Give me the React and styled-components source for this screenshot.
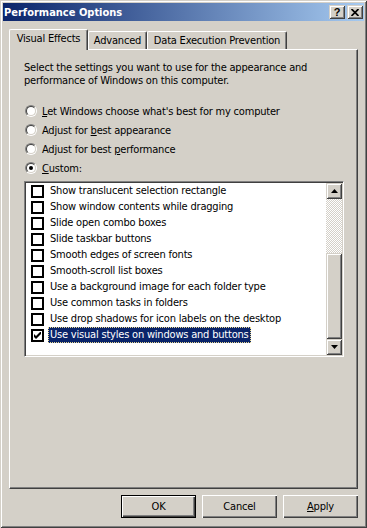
import React from 'react';
import styled, { createGlobalStyle, css } from 'styled-components';

const FACE = '#D4D0C8';
const FONT = `"DejaVu Sans Condensed", "Liberation Sans", sans-serif`;

const Global = createGlobalStyle`
  html, body { margin: 0; padding: 0; background: ${FACE}; }
  body { font-family: ${FONT}; font-size: 11px; color: #000; letter-spacing: -0.2px; }
  * { box-sizing: border-box; }
`;

const raised = css`
  background: ${FACE};
  box-shadow: inset 1px 1px ${FACE}, inset -1px -1px #404040, inset 2px 2px #fff, inset -2px -2px #808080;
`;

const Window = styled.div`
  width: 367px;
  height: 528px;
  padding: 3px;
  background: ${FACE};
  box-shadow: inset 1px 1px ${FACE}, inset -1px -1px #404040, inset 2px 2px #fff, inset -2px -2px #808080;
  display: flex;
  flex-direction: column;
`;

const TitleBar = styled.div`
  flex: none;
  height: 18px;
  display: flex;
  align-items: center;
  padding: 0 1px 0 1px;
  background: linear-gradient(to right, #0a246a, #a6caf0);
`;

const Title = styled.span`
  flex: 1;
  color: #fff;
  font-weight: bold;
  font-size: 11px;
  letter-spacing: 0;
  white-space: nowrap;
`;

const CaptionButton = styled.div`
  ${raised};
  width: 16px;
  height: 14px;
  margin-left: ${p => p.$gap || 0}px;
  display: flex;
  align-items: center;
  justify-content: center;
  font-family: "Liberation Sans", sans-serif;
  font-weight: bold;
  font-size: 11px;
  line-height: 14px;
  letter-spacing: 0;
`;

const TabStrip = styled.div`
  flex: none;
  height: 20px;
  margin: 8px 6px 0 6px;
  display: flex;
  align-items: flex-end;
  position: relative;
  z-index: 1;
`;

const Tab = styled.div`
  flex: none;
  width: ${p => p.$w}px;
  height: ${p => (p.$active ? 21 : 18)}px;
  margin-bottom: ${p => (p.$active ? -1 : 0)}px;
  background: ${FACE};
  border-top: 1px solid #fff;
  border-left: 1px solid #fff;
  border-right: 1px solid #404040;
  border-radius: 2px 2px 0 0;
  box-shadow: inset -1px 0 #808080;
  padding-top: 2px;
  line-height: 13px;
  text-align: center;
  white-space: nowrap;
`;

const Panel = styled.div`
  flex: none;
  height: 440px;
  margin: 0 6px;
  border-top: 1px solid #fff;
  border-left: 1px solid #fff;
  border-right: 1px solid #404040;
  border-bottom: 1px solid #404040;
  box-shadow: inset -1px -1px #808080;
  padding: 11px 14px 0 14px;
  display: flex;
  flex-direction: column;
`;

const Description = styled.p`
  margin: 0;
  line-height: 13px;
  white-space: nowrap;
`;

const RadioGroup = styled.div`
  margin-top: 18px;
  display: flex;
  flex-direction: column;
  gap: 7px;
`;

const RadioRow = styled.div`
  height: 12px;
  display: flex;
  align-items: center;
  gap: 5px;
  padding-left: 1px;
  white-space: nowrap;
`;

const RadioCircle = styled.span`
  flex: none;
  width: 12px;
  height: 12px;
  border-radius: 50%;
  border: 1px solid;
  border-color: #808080 #fff #fff #808080;
  display: flex;
  align-items: center;
  justify-content: center;
`;

const RadioInner = styled.span`
  width: 10px;
  height: 10px;
  border-radius: 50%;
  border: 1px solid;
  border-color: #404040 ${FACE} ${FACE} #404040;
  background: #fff;
  display: flex;
  align-items: center;
  justify-content: center;
  &::after {
    content: '';
    display: ${p => (p.$checked ? 'block' : 'none')};
    width: 4px;
    height: 4px;
    border-radius: 50%;
    background: #000;
  }
`;

const U = styled.span`
  text-decoration: underline;
  text-underline-offset: 1px;
`;

const ListBox = styled.div`
  margin-top: 7px;
  width: 320px;
  height: 176px;
  border: 1px solid;
  border-color: #808080 #fff #fff #808080;
  box-shadow: inset 1px 1px #404040, inset -1px -1px ${FACE};
  background: #fff;
  padding: 1px;
  display: flex;
`;

const Items = styled.div`
  flex: 1;
  display: flex;
  flex-direction: column;
`;

const Item = styled.div`
  height: 16px;
  display: flex;
  align-items: center;
  padding-left: 5px;
  gap: 4px;
  white-space: nowrap;
`;

const CheckBox = styled.span`
  flex: none;
  width: 13px;
  height: 13px;
  border: 2px solid #000;
  background: #fff;
  display: flex;
  align-items: center;
  justify-content: center;
`;

const ItemLabel = styled.span`
  padding: 0 2px;
  line-height: 15px;
  height: 16px;
  ${p =>
    p.$selected &&
    css`
      background: #0a246a;
      color: #fff;
      outline: 1px dotted #e8d890;
      outline-offset: -1px;
    `}
`;

const ScrollBar = styled.div`
  flex: none;
  width: 16px;
  display: flex;
  flex-direction: column;
`;

const ScrollButton = styled.div`
  ${raised};
  flex: none;
  height: 16px;
  display: flex;
  align-items: center;
  justify-content: center;
`;

const Track = styled.div`
  flex: 1;
  display: flex;
  flex-direction: column;
  justify-content: flex-end;
  background: repeating-conic-gradient(#fff 0 25%, ${FACE} 0 50%) 0 0 / 2px 2px;
`;

const Thumb = styled.div`
  ${raised};
  height: 86px;
`;

const ButtonRow = styled.div`
  margin: 6px 6px 0 0;
  display: flex;
  justify-content: flex-end;
  gap: 6px;
`;

const Button = styled.div`
  width: 75px;
  height: 23px;
  display: flex;
  align-items: center;
  justify-content: center;
  background: ${FACE};
  box-shadow: inset 1px 1px #fff, inset -1px -1px #404040, inset -2px -2px #808080;
  ${p =>
    p.$default &&
    css`
      border: 1px solid #000;
    `}
`;

const Arrow = ({ down }) => (
  <svg width="7" height="4" viewBox="0 0 7 4">
    <polygon points={down ? '0,0 7,0 3.5,4' : '0,4 7,4 3.5,0'} fill="#000" />
  </svg>
);

const Check = () => (
  <svg width="7" height="7" viewBox="0 0 7 7">
    <path d="M0 2 L2 4 L7 -1 L7 2 L2 7 L0 5 Z" fill="#000" />
  </svg>
);

const CloseGlyph = () => (
  <svg width="8" height="7" viewBox="0 0 8 7">
    <path d="M0.5 0 L7.5 7 M7.5 0 L0.5 7" stroke="#000" strokeWidth="1.7" />
  </svg>
);

const items = [
  'Show translucent selection rectangle',
  'Show window contents while dragging',
  'Slide open combo boxes',
  'Slide taskbar buttons',
  'Smooth edges of screen fonts',
  'Smooth-scroll list boxes',
  'Use a background image for each folder type',
  'Use common tasks in folders',
  'Use drop shadows for icon labels on the desktop',
  'Use visual styles on windows and buttons',
];

export default function App() {
  return (
    <>
      <Global />
      <Window>
        <TitleBar>
          <Title>Performance Options</Title>
          <CaptionButton>?</CaptionButton>
          <CaptionButton $gap={2}>
            <CloseGlyph />
          </CaptionButton>
        </TitleBar>
        <TabStrip>
          <Tab $w={79} $active>Visual Effects</Tab>
          <Tab $w={59}>Advanced</Tab>
          <Tab $w={140}>Data Execution Prevention</Tab>
        </TabStrip>
        <Panel>
          <Description>
            Select the settings you want to use for the appearance and
            <br />
            performance of Windows on this computer.
          </Description>
          <RadioGroup>
            <RadioRow>
              <RadioCircle><RadioInner /></RadioCircle>
              <span><U>L</U>et Windows choose what's best for my computer</span>
            </RadioRow>
            <RadioRow>
              <RadioCircle><RadioInner /></RadioCircle>
              <span>Adjust for <U>b</U>est appearance</span>
            </RadioRow>
            <RadioRow>
              <RadioCircle><RadioInner /></RadioCircle>
              <span>Adjust for best <U>p</U>erformance</span>
            </RadioRow>
            <RadioRow>
              <RadioCircle><RadioInner $checked /></RadioCircle>
              <span><U>C</U>ustom:</span>
            </RadioRow>
          </RadioGroup>
          <ListBox>
            <Items>
              {items.map((t, i) => {
                const sel = i === items.length - 1;
                return (
                  <Item key={t}>
                    <CheckBox>{sel && <Check />}</CheckBox>
                    <ItemLabel $selected={sel}>{t}</ItemLabel>
                  </Item>
                );
              })}
            </Items>
            <ScrollBar>
              <ScrollButton><Arrow /></ScrollButton>
              <Track><Thumb /></Track>
              <ScrollButton><Arrow down /></ScrollButton>
            </ScrollBar>
          </ListBox>
        </Panel>
        <ButtonRow>
          <Button $default>OK</Button>
          <Button>Cancel</Button>
          <Button><U>A</U>pply</Button>
        </ButtonRow>
      </Window>
    </>
  );
}
